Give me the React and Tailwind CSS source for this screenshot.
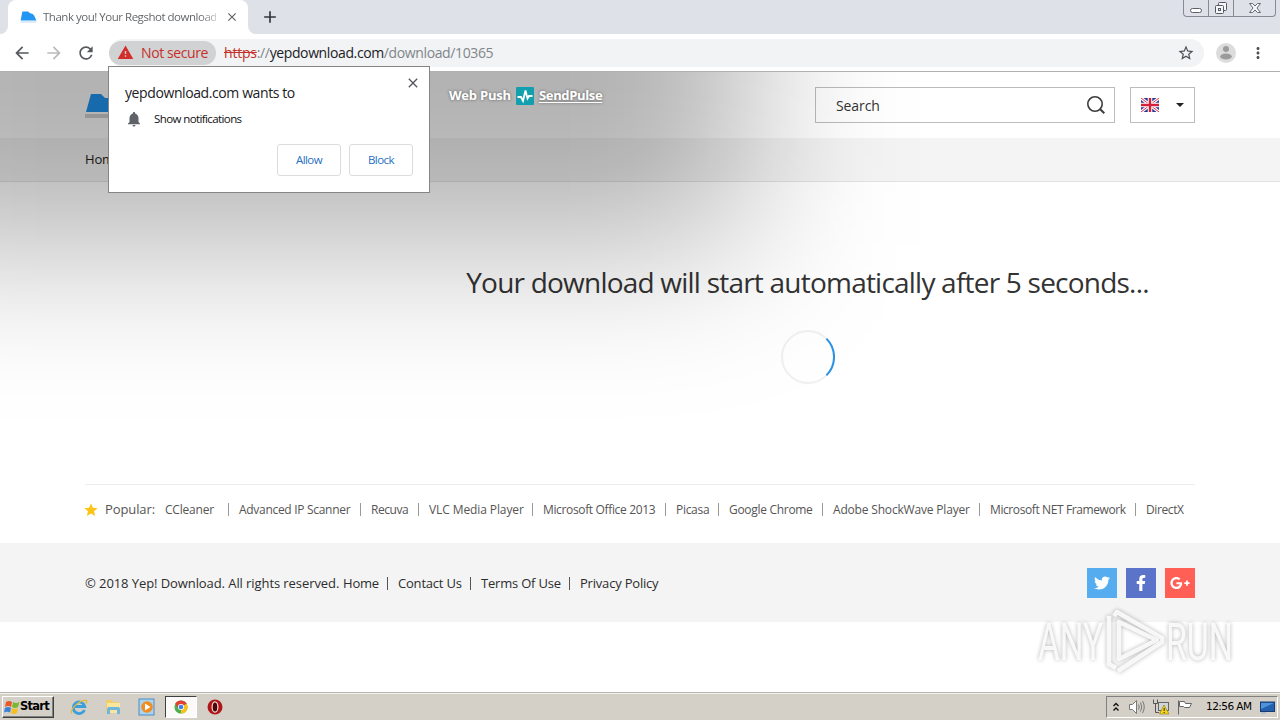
import {
  FaTwitter,
  FaFacebookF,
  FaGooglePlusG,
} from 'react-icons/fa';
import {
  MdArrowBack,
  MdArrowForward,
  MdRefresh,
  MdWarning,
  MdStarBorder,
  MdMoreVert,
  MdNotifications,
  MdClose,
  MdAdd,
  MdStar,
} from 'react-icons/md';

const popularLinks = [
  { label: 'CCleaner', width: 'w-[63px]', tracking: 'tracking-[-0.2px]' },
  { label: 'Advanced IP Scanner', width: 'w-[121px]', tracking: 'tracking-[-0.3px]' },
  { label: 'Recuva', width: 'w-[47px]', tracking: 'tracking-[-0.45px]' },
  { label: 'VLC Media Player', width: 'w-[103px]', tracking: 'tracking-[-0.1px]' },
  { label: 'Microsoft Office 2013', width: 'w-[122px]', tracking: 'tracking-[-0.35px]' },
  { label: 'Picasa', width: 'w-[42px]', tracking: 'tracking-[-0.3px]' },
  { label: 'Google Chrome', width: 'w-[93px]', tracking: 'tracking-[-0.3px]' },
  { label: 'Adobe ShockWave Player', width: 'w-[146px]', tracking: 'tracking-[-0.18px]' },
  { label: 'Microsoft NET Framework', width: 'w-[145px]', tracking: 'tracking-[-0.4px]' },
  { label: 'DirectX', width: 'w-[40px]', tracking: 'tracking-[-0.4px]' },
];

const footerLinks = [
  { label: 'Home', width: 'w-[44px]' },
  { label: 'Contact Us', width: 'w-[72px]' },
  { label: 'Terms Of Use', width: 'w-[88px]' },
  { label: 'Privacy Policy', width: 'w-[80px]' },
];

const socials = [
  { icon: FaTwitter, color: 'bg-[#55acee]', size: 'h-4 w-4' },
  { icon: FaFacebookF, color: 'bg-[#5b73c9]', size: 'h-4 w-4' },
  { icon: FaGooglePlusG, color: 'bg-[#ff5f55]', size: 'h-5 w-5' },
];

const FolderLogo = ({ className }) => (
  <svg viewBox="0 0 16 12" className={className} preserveAspectRatio="none">
    <path d="M2.2 0.5H7.5L9.6 2.2Q12.6 2.6 13.4 4.8L15.4 9.6H0.6Z" fill="#2196f3" />
    <path d="M0.6 10.2H15.4V11.6H0.6Z" fill="#cfe3f3" />
  </svg>
);

/**
 * Chrome tab strip with window buttons
 */
const TabStrip = () => (
  <div className="flex h-[34px] items-start bg-[#dee1e8]">
    <div className="flex h-[34px] w-2 bg-white">
      <div className="flex-1 rounded-br-lg bg-[#dee1e8]" />
    </div>
    <div className="flex h-[34px] w-[240px] items-center rounded-t-lg bg-white pl-3">
      <FolderLogo className="h-3 w-[17px] shrink-0" />
      <span className="ml-[6px] w-[173px] whitespace-nowrap bg-gradient-to-r from-[#5c5f63] from-90% to-[#c4c4c4] bg-clip-text text-[11.5px] tracking-[-0.48px] text-transparent">
        Thank you! Your Regshot download
      </span>
      <MdClose className="ml-[9px] h-[14px] w-[14px] shrink-0 text-[#5f6368]" />
    </div>
    <div className="flex h-[34px] w-2 bg-white">
      <div className="flex-1 rounded-bl-lg bg-[#dee1e8]" />
    </div>
    <MdAdd className="ml-[4px] mt-[7px] h-5 w-5 text-[#33363b]" />
    <div className="ml-auto mr-[4px] flex h-[17px] w-[93px] rounded-b-[4px] border border-t-0 border-[#868a93]">
      <div className="flex w-[25px] items-end justify-center border-r border-[#868a93] pb-[3px]">
        <div className="h-[5px] w-3 rounded-sm border border-[#5c606b] bg-white" />
      </div>
      <div className="flex w-[25px] items-center justify-center border-r border-[#868a93]">
        <svg viewBox="0 0 14 14" className="h-[14px] w-[14px]" fill="#f5f6f8" stroke="#555963">
          <rect x="4.5" y="1.5" width="8" height="8" rx="1" />
          <rect x="1.5" y="4.5" width="8" height="8" rx="1" />
          <rect x="4.5" y="7.5" width="2" height="2" />
        </svg>
      </div>
      <div className="flex flex-1 items-center justify-center">
        <svg viewBox="0 0 14 12" className="h-3 w-[14px]">
          <path
            d="M1.5 1.5H4.5L7 4L9.5 1.5H12.5L9 6L12.5 10.5H9.5L7 8L4.5 10.5H1.5L5 6Z"
            fill="#f5f6f8"
            stroke="#666a74"
          />
        </svg>
      </div>
    </div>
  </div>
);

/**
 * Navigation buttons and address bar
 */
const Toolbar = () => (
  <div className="flex h-[38px] items-center border-b border-[#b0b0b0] bg-white pl-3 pr-3">
    <MdArrowBack className="h-5 w-5 text-[#55585c]" />
    <MdArrowForward className="ml-3 h-5 w-5 text-[#b9babc]" />
    <MdRefresh className="ml-3 h-5 w-5 text-[#55585c]" />
    <div className="ml-[13px] flex h-7 w-[1095px] items-center rounded-full bg-[#f1f3f4]">
      <div className="flex h-6 w-[107px] items-center rounded-full bg-[#d1d2d3] pl-2">
        <MdWarning className="h-[17px] w-[17px] text-[#d32f2a]" />
        <span className="ml-[7px] whitespace-nowrap text-[14px] tracking-[-0.4px] text-[#c5302a]">Not secure</span>
      </div>
      <div className="ml-2 whitespace-nowrap text-[14px] tracking-[-0.38px] text-[#80868b]">
        <span className="tracking-[-0.2px] text-[#c5302a] line-through">https</span>
        ://<span className="text-[#202124]">yepdownload.com</span>/download/10365
      </div>
      <MdStarBorder className="ml-auto mr-[9px] h-[18px] w-[18px] text-[#4c4f54]" />
    </div>
    <svg viewBox="0 0 20 20" className="ml-[12px] h-5 w-5">
      <circle cx="10" cy="10" r="10" fill="#dcdcdc" />
      <circle cx="10" cy="6" r="3" fill="#9b9b9b" />
      <ellipse cx="10" cy="13.5" rx="5.8" ry="3" fill="#9b9b9b" />
    </svg>
    <MdMoreVert className="ml-[13px] h-[18px] w-[18px] text-[#4c4f54]" />
  </div>
);

const UnionJack = () => (
  <svg viewBox="0 0 18 14" className="h-[14px] w-[18px]">
    <path d="M0 0H18V14H0Z" fill="#2b3a92" />
    <path d="M0 0L18 14M18 0L0 14" stroke="#fff" strokeWidth="3" />
    <path d="M0 0L18 14M18 0L0 14" stroke="#e0304a" strokeWidth="1" />
    <path d="M9 0V14M0 7H18" stroke="#fff" strokeWidth="4.5" />
    <path d="M9 0V14M0 7H18" stroke="#d5203a" strokeWidth="2.4" />
  </svg>
);

const SiteHeader = () => (
  <header>
    <div className="flex h-[66px] items-start bg-white pl-[85px] pr-[85px] pt-[15px]">
      <svg viewBox="0 0 40 32" className="h-8 w-10">
        <path d="M6 7H16L20 11H30L38 25H1Z" fill="#2196f3" />
        <path d="M0 27H40V31H0Z" fill="#d2d2d2" />
      </svg>
      <div className="ml-auto flex h-9 w-[300px] items-center justify-between border border-[#bcbcbc] pl-5 pr-2">
        <span className="text-[14px] tracking-[-0.1px] text-[#333]">Search</span>
        <svg viewBox="0 0 20 20" className="h-5 w-5" fill="none" stroke="#3c3c3c" strokeWidth="1.6">
          <circle cx="9" cy="9" r="7.2" />
          <path d="M14.2 14.2L18.3 18.3" strokeWidth="2" />
        </svg>
      </div>
      <div className="ml-[15px] flex h-9 w-[65px] items-center border border-[#bcbcbc] pl-[10px]">
        <UnionJack />
        <div className="ml-[17px] h-0 w-0 border-x-4 border-t-4 border-x-transparent border-t-[#222]" />
      </div>
    </div>
    <nav className="flex h-11 items-center border-b border-[#e2e2e2] bg-[#f4f4f4] pl-[85px]">
      <span className="text-[13px] tracking-[-0.2px] text-[#222]">Home</span>
    </nav>
  </header>
);

/**
 * Web push credit, shown over the dimmed page
 */
const WebPushCredit = () => (
  <div className="absolute left-[449px] top-[14px] flex h-5 items-center whitespace-nowrap text-[13px] font-bold text-white [text-shadow:0_0_3px_rgba(0,0,0,0.5)]">
    <span className="w-[67px] tracking-[-0.2px]">Web Push</span>
    <svg viewBox="0 0 18 18" className="mb-px h-[18px] w-[18px]">
      <rect width="18" height="18" rx="1" fill="#12a0ae" />
      <path d="M1.5 10H5L7 14L9.5 3.5L11.5 11.5L13 9H16.5" fill="none" stroke="#fff" strokeWidth="1.8" />
    </svg>
    <span className="ml-[5px] tracking-[-0.35px] underline underline-offset-2">SendPulse</span>
  </div>
);

const PermissionPrompt = () => (
  <div className="absolute left-[108px] top-[66px] h-[127px] w-[322px] border border-[#858585] bg-white pl-4 pr-4 pt-[15px]">
    <MdClose className="absolute right-[8px] top-[8px] h-4 w-4 text-[#55585c]" />
    <p className="whitespace-nowrap text-[14px] leading-[22px] tracking-[-0.4px] text-[#202124]">yepdownload.com wants to</p>
    <div className="mt-[5px] flex h-5 items-center">
      <MdNotifications className="h-[18px] w-[18px] text-[#5f6368]" />
      <span className="ml-[11px] whitespace-nowrap text-[11.5px] tracking-[-0.6px] text-[#111]">Show notifications</span>
    </div>
    <div className="mt-[15px] flex justify-end gap-2 text-[11.5px] tracking-[-0.55px] text-[#1f6fc4]">
      <button className="h-8 w-16 rounded-[3px] border border-[#dadce0]">Allow</button>
      <button className="h-8 w-16 rounded-[3px] border border-[#dadce0]">Block</button>
    </div>
  </div>
);

const Watermark = () => (
  <svg
    viewBox="0 0 230 70"
    className="absolute left-[1030px] top-[606px] h-[70px] w-[230px] drop-shadow-[0_0_2px_rgba(0,0,0,0.35)]"
  >
    <g fill="#fff" fillOpacity="0.85" fontFamily="Roboto, sans-serif" fontSize="51">
      <text x="8" y="54" textLength="65" lengthAdjust="spacingAndGlyphs">ANY</text>
      <text x="136" y="54" textLength="67" lengthAdjust="spacingAndGlyphs">RUN</text>
    </g>
    <g fill="none" stroke="#fff" strokeOpacity="0.85" strokeWidth="4.5" strokeLinejoin="round">
      <path d="M89 16V53L127 34Z" />
      <path d="M79 10V58L86 62" />
      <path d="M84 10L87 6L132 32V36L88 65" />
    </g>
  </svg>
);

const Taskbar = () => (
  <div className="flex h-[28px] items-center border-t border-[#b8b6b0] bg-[#d4d0c8] pl-[2px] pr-[2px] pt-px shadow-[inset_0_1px_0_#f4f2ee]">
    <div className="flex h-[22px] w-[52px] items-center border border-b-[#404040] border-l-white border-r-[#404040] border-t-white pl-px shadow-[inset_-1px_-1px_0_#808080]">
      <svg viewBox="0 0 16 16" className="h-4 w-4 shrink-0">
        <path d="M2 3Q5 1 8 3L7 8Q4 6 1 8Z" fill="#e9572b" />
        <path d="M9 3Q12 5 15.500 3L14 8Q11 10 8 8Z" fill="#7cb82f" />
        <path d="M1 9Q4 7 7 9L6 13.500Q3 12 0 13.500Z" fill="#3b82d6" />
        <path d="M8 9Q11 11 14 9L13 14Q10 16 7 14Z" fill="#f4c020" />
      </svg>
      <span className="font-['DejaVu_Sans'] text-[11.5px] font-bold tracking-[-0.75px] text-black">Start</span>
    </div>
    <svg viewBox="0 0 18 18" className="ml-[16px] h-[18px] w-[18px]">
      <path d="M14.500 12A5.800 5.800 0 1 1 14.800 8.500H5" fill="none" stroke="#3a9fdc" strokeWidth="2.800" />
      <path d="M2 15.500C-1 12 10 1 16.500 2.500Q17.500 3.500 16 5.500" fill="none" stroke="#e2b93b" strokeWidth="1.300" />
    </svg>
    <svg viewBox="0 0 18 18" className="ml-[16px] h-[18px] w-[18px]">
      <path d="M2 2H8L9 4H15V14H2Z" fill="#f0cf6a" />
      <path d="M3 5H16V15H3Z" fill="#f8e6a0" />
      <path d="M3 16V11Q3 9 5 9H14Q16 9 16 11V16H13V12H6V16Z" fill="#6fb6dc" />
    </svg>
    <svg viewBox="0 0 18 18" className="ml-[16px] h-[18px] w-[18px]">
      <rect x="1" y="1" width="15" height="16" fill="#a9d3ef" stroke="#4b8dbf" />
      <circle cx="9" cy="9" r="5.800" fill="#f28b20" />
      <path d="M7 5.500L12.500 9L7 12.500Z" fill="#fff" />
    </svg>
    <div className="ml-[9px] flex h-[22px] w-8 items-center justify-center border border-b-white border-l-[#404040] border-r-white border-t-[#404040] bg-[#fbfaf8]">
      <svg viewBox="0 0 16 16" className="h-[14px] w-[14px]">
        <circle cx="8" cy="8" r="7.500" fill="#4caf50" />
        <path d="M8 8L1.500 4.200A7.500 7.500 0 0 1 14.500 4.200Z" fill="#e34133" />
        <path d="M8 8L14.500 4.200A7.500 7.500 0 0 1 8 15.500Z" fill="#fbc31a" />
        <path d="M1.500 4.200L4.800 9.500L8 8V4.200Z" fill="#e34133" />
        <circle cx="8" cy="8" r="3.500" fill="#fff" />
        <circle cx="8" cy="8" r="2.700" fill="#3f83e8" />
      </svg>
    </div>
    <svg viewBox="0 0 16 16" className="ml-[10px] h-4 w-4">
      <circle cx="8" cy="8" r="7.500" fill="#b01518" />
      <ellipse cx="8" cy="8" rx="2.900" ry="5.200" fill="#4d0507" stroke="#f1dede" strokeWidth="1.200" />
    </svg>
    <div className="ml-auto flex h-[22px] w-[172px] items-center border border-b-white border-l-[#808080] border-r-white border-t-[#808080] pl-[5px]">
      <svg viewBox="0 0 8 10" className="h-[10px] w-2" fill="none" stroke="#111" strokeWidth="1.400">
        <path d="M1.500 4L4 1.500L6.500 4M1.500 8.500L4 6L6.500 8.500" />
      </svg>
      <svg viewBox="0 0 18 16" className="ml-[8px] h-4 w-[18px]" fill="none" stroke="#777">
        <path d="M1.500 5.500H4.500L8.500 1.500V14.500L4.500 10.500H1.500Z" fill="#fff" />
        <path d="M10.500 5.500Q12 8 10.500 10.500M12.500 3.500Q15 8 12.500 12.500M14.500 2Q18 8 14.500 14" />
      </svg>
      <svg viewBox="0 0 18 18" className="ml-[6px] h-[18px] w-[18px]">
        <rect x="6.500" y="4.500" width="10" height="8" fill="#cfd5d8" stroke="#666" />
        <path d="M1.500 1.500V5.500H5.500V1.500M3.500 5.500V14.500H7" fill="none" stroke="#555" />
        <path d="M12 7L17 16H7.500Z" fill="#f7d51d" stroke="#9a8412" strokeWidth="0.700" />
        <path d="M12.200 10V13M12.200 14V15" stroke="#222" />
      </svg>
      <svg viewBox="0 0 17 16" className="ml-[6px] h-4 w-[17px]" fill="#fff" stroke="#666">
        <path d="M2.500 15.500V1.500" />
        <path d="M3.500 2.500H8.500L9.500 4.500H15.500L13.500 8.500H8.500L7.500 7.500H3.500Z" />
      </svg>
      <span className="ml-[13px] w-[47px] whitespace-nowrap font-['DejaVu_Sans'] text-[10.5px] tracking-[-0.55px] text-black">
        12:56 AM
      </span>
      <svg viewBox="0 0 15 13" className="ml-[7px] h-[13px] w-[15px]">
        <rect x="0.500" y="1" width="14" height="9.500" fill="#2361b0" stroke="#183c72" />
        <path d="M1 2H14L1 8Z" fill="#4e93d9" />
        <path d="M1 12H6" stroke="#a8bdd0" strokeWidth="1.500" />
      </svg>
    </div>
  </div>
);

const App = () => {
  return (
    <div className="relative flex h-[720px] w-[1280px] flex-col overflow-hidden bg-white font-['Open_Sans',sans-serif]">
      <TabStrip />
      <Toolbar />

      {/* Page Content */}
      <div className="relative flex flex-1 flex-col overflow-hidden">
        <SiteHeader />

        <main className="flex h-[302px] flex-col items-center pl-[335px]">
          <h1 className="mt-[79px] whitespace-nowrap text-[28px] leading-[42px] tracking-[-0.78px] text-[#333]">
            Your download will start automatically after 5 seconds...
          </h1>
          <svg viewBox="0 0 54 54" className="mt-[27px] h-[54px] w-[54px]" fill="none" strokeWidth="2">
            <circle cx="27" cy="27" r="26" stroke="#f0f0f0" />
            <path d="M45.4 8.600A26 26 0 0 1 45.400 45.400" stroke="#2b93e6" />
          </svg>
        </main>

        {/* Popular downloads */}
        <div className="mx-[85px] flex h-[59px] items-center border-t border-[#ededed] pb-[9px] text-[12px] text-[#555]">
          <MdStar className="-ml-[2px] h-4 w-4 text-[#fcc419]" />
          <span className="ml-[6px] w-[60px] pt-px text-[13px] tracking-[-0.1px]">Popular:</span>
          {popularLinks.map((link, i) => (
            <div key={link.label} className="flex items-center">
              <span className={`${link.width} ${link.tracking} whitespace-nowrap pt-px`}>{link.label}</span>
              {i < popularLinks.length - 1 && <span className="mr-[10px] h-[13px] w-px bg-[#999]" />}
            </div>
          ))}
        </div>

        <footer className="flex h-[79px] shrink-0 items-center justify-between bg-[#f4f4f4] px-[85px]">
          <div className="flex items-center whitespace-nowrap pt-px text-[13px] tracking-[-0.2px] text-[#2d2d2d]">
            <span className="w-[258px] pt-px tracking-[-0.08px]">© 2018 Yep! Download. All rights reserved.</span>
            {footerLinks.map((link, i) => (
              <div key={link.label} className="flex items-center">
                <span className={`${link.width} pt-px`}>{link.label}</span>
                {i < footerLinks.length - 1 && <span className="mr-[10px] h-[13px] w-px bg-[#555]" />}
              </div>
            ))}
          </div>
          <div className="flex gap-[9px]">
            {socials.map(({ icon: Icon, color, size }) => (
              <div key={color} className={`flex h-[30px] w-[30px] items-center justify-center text-white ${color}`}>
                <Icon className={size} />
              </div>
            ))}
          </div>
        </footer>

        {/* Shade behind the permission prompt */}
        <div className="absolute -left-[140px] -top-[400px] h-[572px] w-[885px] bg-black/30 blur-[80px]" />
        <WebPushCredit />
      </div>

      <Taskbar />
      <PermissionPrompt />
      <Watermark />
    </div>
  );
};

export default App;
